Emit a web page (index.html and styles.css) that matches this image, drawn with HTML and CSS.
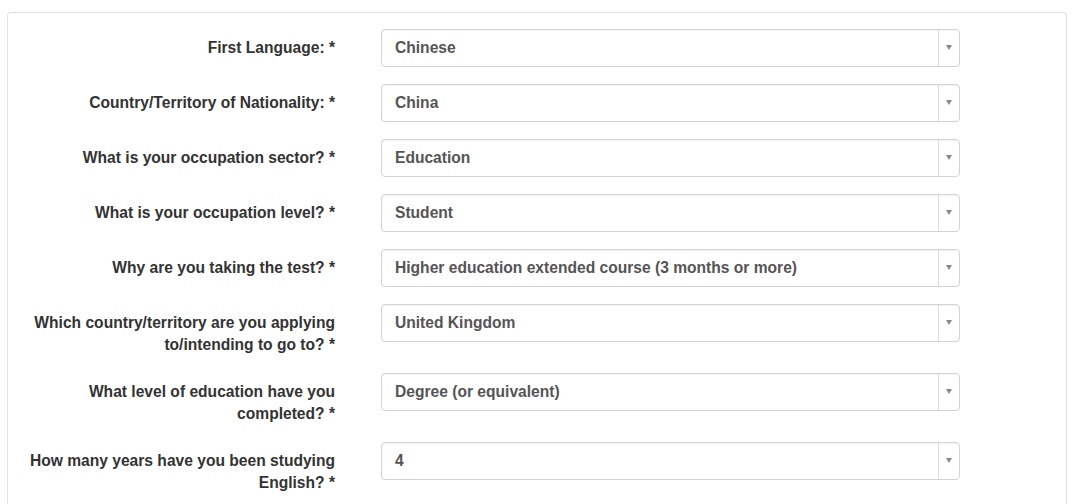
FILE: index.html
```html
<!DOCTYPE html>
<html lang="en">
<head>
  <meta charset="UTF-8">
  <title>Profile Details</title>
  <link rel="stylesheet" href="styles.css">
</head>
<body>

<div class="panel">
  <form class="profile-form">
    <div class="form-row">
      <label class="form-label">First Language: *</label>
      <div class="select-box"><span class="select-value">Chinese</span><span class="select-arrow"></span></div>
    </div>

    <div class="form-row">
      <label class="form-label">Country/Territory of Nationality: *</label>
      <div class="select-box"><span class="select-value">China</span><span class="select-arrow"></span></div>
    </div>

    <div class="form-row">
      <label class="form-label">What is your occupation sector? *</label>
      <div class="select-box"><span class="select-value">Education</span><span class="select-arrow"></span></div>
    </div>

    <div class="form-row">
      <label class="form-label">What is your occupation level? *</label>
      <div class="select-box"><span class="select-value">Student</span><span class="select-arrow"></span></div>
    </div>

    <div class="form-row">
      <label class="form-label">Why are you taking the test? *</label>
      <div class="select-box"><span class="select-value">Higher education extended course (3 months or more)</span><span class="select-arrow"></span></div>
    </div>

    <div class="form-row">
      <label class="form-label">Which country/territory are you applying to/intending to go to? *</label>
      <div class="select-box"><span class="select-value">United Kingdom</span><span class="select-arrow"></span></div>
    </div>

    <div class="form-row">
      <label class="form-label">What level of education have you completed? *</label>
      <div class="select-box"><span class="select-value">Degree (or equivalent)</span><span class="select-arrow"></span></div>
    </div>

    <div class="form-row">
      <label class="form-label">How many years have you been studying English? *</label>
      <div class="select-box"><span class="select-value">4</span><span class="select-arrow"></span></div>
    </div>
  </form>
</div>

</body>
</html>
```

FILE: styles.css
```css
body {
  margin: 0;
  font-family: "Liberation Sans", Arial, sans-serif;
  font-size: 15.6px;
  background: #fff;
  color: #333;
  overflow: hidden;
}
.panel {
  margin: 12px 13px 0 7px;
  border: 1px solid #e3e3e3;
  border-bottom: none;
  border-radius: 4px 4px 0 0;
  padding: 16px 0 0;
  height: 492px;
  box-sizing: border-box;
}
.form-row {
  display: grid;
  grid-template-columns: 313px 579px;
  column-gap: 46px;
  padding-left: 14px;
  margin-bottom: 17px;
  align-items: start;
}
.form-row:last-child {
  margin-bottom: 0;
}
.form-label {
  text-align: right;
  font-weight: bold;
  line-height: 22px;
  padding-top: 8px;
}
.select-box {
  display: flex;
  height: 38px;
  box-sizing: border-box;
  border: 1px solid #d3d3d3;
  border-radius: 4px;
  box-shadow: inset 0 1px 1px rgba(0,0,0,0.05);
}
.select-value {
  flex: 1;
  padding: 0 13px;
  line-height: 36px;
  font-weight: bold;
  color: #555;
}
.select-arrow {
  width: 20px;
  border-left: 1px solid #dcdcdc;
  position: relative;
}
.select-arrow::after {
  content: "";
  position: absolute;
  left: 7px;
  top: 15px;
  border-left: 3px solid transparent;
  border-right: 3px solid transparent;
  border-top: 5px solid #888;
}
```
